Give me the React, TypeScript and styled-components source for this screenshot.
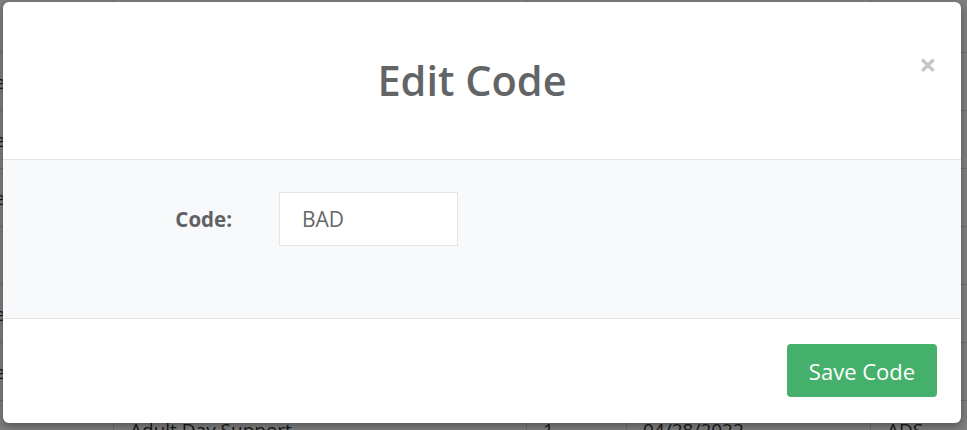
import React from "react";
import styled, { createGlobalStyle } from "styled-components";

const Global = createGlobalStyle`
  html, body { margin: 0; padding: 0; background: #ffffff; overflow: hidden; }
  body { font-family: "Open Sans", "Liberation Sans", sans-serif; width: 967px; height: 430px; }
  * { box-sizing: border-box; }
`;

const Page = styled.div`
  position: relative;
  width: 967px;
  height: 430px;
  overflow: hidden;
`;

const Table = styled.div`
  display: flex;
  flex-direction: column;
  margin-top: -5px;
  margin-left: -60px;
`;

const Row = styled.div`
  display: grid;
  grid-template-columns: 173px 413px 100px 244px 160px;
  height: 58px;
  border-bottom: 1px solid #d9d9d9;
`;

const Cell = styled.div<{ $first?: boolean }>`
  display: flex;
  align-items: center;
  padding: 0 ${(p) => (p.$first ? "0 0 8px" : "16px")};
  border-left: ${(p) => (p.$first ? "none" : "1px solid #d9d9d9")};
  color: #333;
  font-size: 19px;
  white-space: nowrap;
`;

const Backdrop = styled.div`
  position: absolute;
  inset: 0;
  background: rgba(0, 0, 0, 0.5);
`;

const Modal = styled.div`
  position: absolute;
  top: 2px;
  left: 3px;
  width: 958px;
  height: 421px;
  background: #ffffff;
  border-radius: 6px;
  box-shadow: 0 3px 8px rgba(0, 0, 0, 0.35);
  display: flex;
  flex-direction: column;
  overflow: hidden;
`;

const Header = styled.div`
  height: 158px;
  flex: none;
  display: flex;
  align-items: center;
  padding: 0 26px 0 30px;
  border-bottom: 1px solid #e3e4e6;
`;

const Title = styled.h1`
  flex: 1;
  margin: 0;
  text-align: center;
  font-size: 41.5px;
  font-weight: 600;
  color: #636466;
  line-height: 1;
  padding-top: 0;
`;

const Close = styled.button`
  align-self: flex-start;
  margin-top: 46px;
  margin-left: 8px;
  width: 16px;
  padding: 0;
  border: none;
  background: none;
  color: #c6c6c6;
  font-family: "Open Sans", "Liberation Sans", sans-serif;
  font-size: 31px;
  font-weight: 700;
  line-height: 32px;
  cursor: pointer;
`;

const Body = styled.div`
  height: 159px;
  flex: none;
  background: #f8f9fa;
  border-bottom: 1px solid #e3e4e6;
  padding-top: 32px;
`;

const FormRow = styled.div`
  display: flex;
  align-items: center;
`;

const Label = styled.label`
  width: 229px;
  flex: none;
  text-align: right;
  font-size: 20.5px;
  font-weight: 700;
  color: #606164;
`;

const Input = styled.input`
  margin-left: 47px;
  width: 179px;
  height: 54px;
  border: 1px solid #e3e4e6;
  border-radius: 0;
  background: #ffffff;
  padding: 0 0 0 22px;
  font-family: "Open Sans", "Liberation Sans", sans-serif;
  font-size: 21px;
  color: #666769;
  outline: none;
`;

const Footer = styled.div`
  flex: 1;
  display: flex;
  justify-content: flex-end;
  align-items: flex-start;
  padding: 25px 24px 0 0;
`;

const SaveButton = styled.button`
  height: 53px;
  width: 150px;
  border: none;
  border-radius: 4px;
  background: #45b06b;
  color: #ffffff;
  font-family: "Open Sans", "Liberation Sans", sans-serif;
  font-size: 22px;
  font-weight: 400;
  cursor: pointer;
`;

const rows = [
  ["", "", "", "", ""],
  ["Delete", "", "", "", ""],
  ["Delete", "", "", "", ""],
  ["Delete", "", "", "", ""],
  ["", "", "", "", ""],
  ["Delete", "", "", "", ""],
  ["Delete", "", "", "", ""],
  ["", "Adult Day Support", "1", "04/28/2022", "ADS"],
];

export default function App() {
  return (
    <Page>
      <Global />
      <Table>
        {rows.map((r, i) => (
          <Row key={i}>
            {r.map((c, j) => (
              <Cell key={j} $first={j === 0}>
                {c}
              </Cell>
            ))}
          </Row>
        ))}
      </Table>
      <Backdrop />
      <Modal>
        <Header>
          <Title>Edit Code</Title>
          <Close aria-label="Close">×</Close>
        </Header>
        <Body>
          <FormRow>
            <Label htmlFor="code">Code:</Label>
            <Input id="code" defaultValue="BAD" />
          </FormRow>
        </Body>
        <Footer>
          <SaveButton>Save Code</SaveButton>
        </Footer>
      </Modal>
    </Page>
  );
}
